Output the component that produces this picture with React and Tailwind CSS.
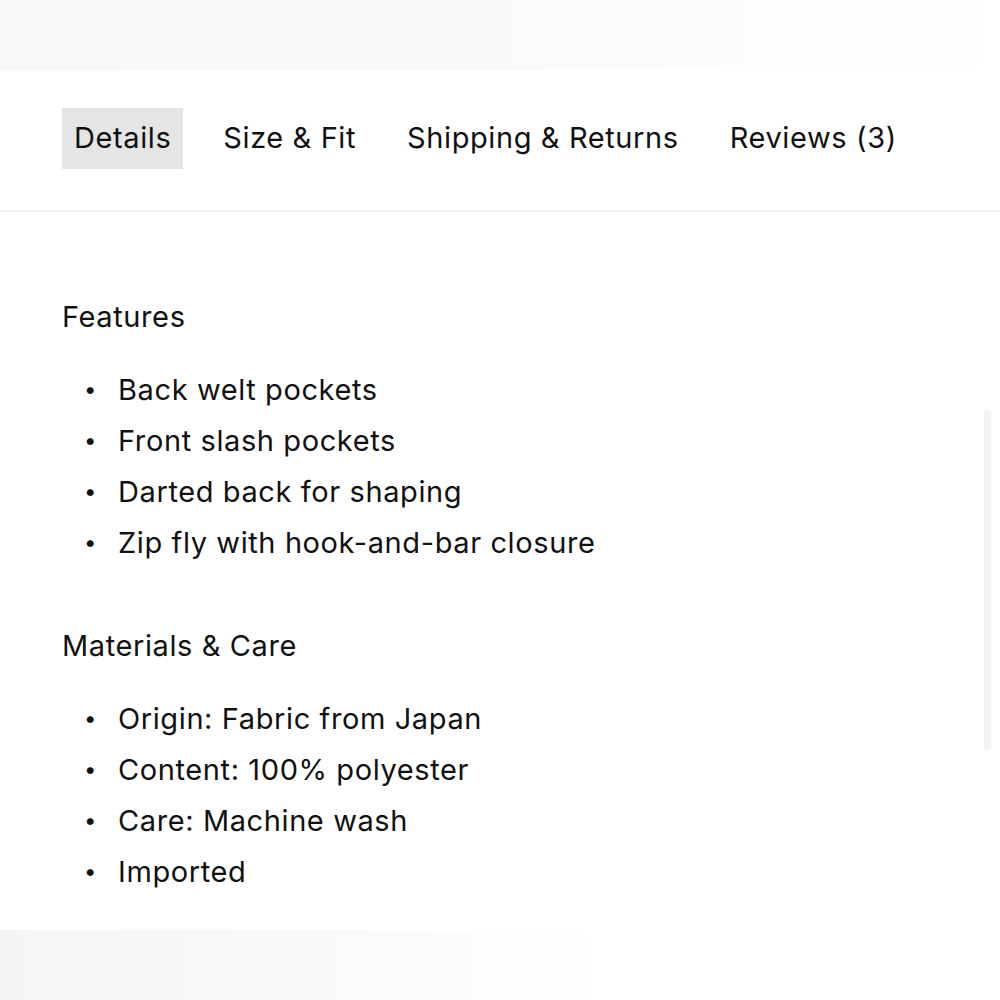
import React from 'react'

const tabs = ['Details', 'Size & Fit', 'Shipping & Returns', 'Reviews (3)']

const sections = [
  {
    title: 'Features',
    items: ['Back welt pockets', 'Front slash pockets', 'Darted back for shaping', 'Zip fly with hook-and-bar closure'],
  },
  {
    title: 'Materials & Care',
    items: ['Origin: Fabric from Japan', 'Content: 100% polyester', 'Care: Machine wash', 'Imported'],
  },
]

export default function App() {
  return (
    <div className="w-[1000px] h-[1000px] flex flex-col bg-white text-[#111] font-['Inter','Liberation_Sans',sans-serif] tracking-[0.6px] overflow-hidden">
      {/* top fade */}
      <div className="h-[70px] shrink-0 bg-gradient-to-r from-[#f8f8f8] via-[#fafafa] to-white" />

      <div className="relative h-[860px] shrink-0 overflow-hidden bg-white">
        {/* Tabs */}
        <nav className="flex items-center gap-[29px] px-[62px] pt-[38px] pb-[41px] border-b-2 border-[#f2f2f2]">
          {tabs.map((tab, i) => (
            <button
              key={tab}
              className={`h-[61px] px-[11px] pb-[3px] text-[29px] leading-none ${i === 0 ? 'bg-[#e5e5e5] px-[12px]' : ''}`}
            >
              {tab}
            </button>
          ))}
        </nav>

        {/* Content */}
        <div className="px-[62px] pt-[86px]">
          {sections.map(section => (
            <section key={section.title} className="mb-[59px]">
              <h3 className="text-[29px] leading-[38px]">{section.title}</h3>
              <ul className="mt-[28px]">
                {section.items.map(item => (
                  <li key={item} className="flex items-center text-[29px] leading-[51px]">
                    <span className="w-[56px] pl-[22px] text-[22px]">•</span>
                    {item}
                  </li>
                ))}
              </ul>
            </section>
          ))}
        </div>

        {/* scrollbar */}
        <div className="absolute right-[9px] top-[340px] w-[7px] h-[340px] rounded-full bg-[#f2f2f2]" />
      </div>

      {/* bottom fade */}
      <div className="flex-1 bg-gradient-to-r from-[#f5f5f5] via-[#fbfbfb] via-40% to-white to-60%" />
    </div>
  )
}
